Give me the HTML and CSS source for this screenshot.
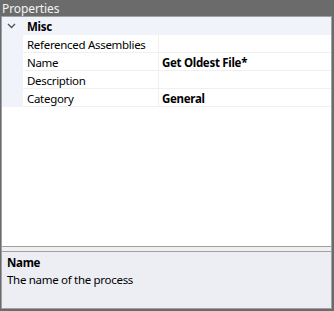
FILE: index.html
```html
<!DOCTYPE html>
<html>
<head>
<meta charset="utf-8">
<link rel="stylesheet" href="styles.css">
</head>
<body>
<div class="title">Properties</div>
<div class="panel">
  <div class="grid">
    <div class="cat">
      <div class="gut"><svg width="9" height="6" viewBox="0 0 9 6" class="chev"><path d="M1 1 L4.5 4.5 L8 1" fill="none" stroke="#555" stroke-width="1.4"/></svg></div>
      <div class="catname">Misc</div>
    </div>
    <div class="row"><div class="gut"></div><div class="name">Referenced Assemblies</div><div class="val"></div></div>
    <div class="row"><div class="gut"></div><div class="name">Name</div><div class="val bold">Get Oldest File*</div></div>
    <div class="row"><div class="gut"></div><div class="name">Description</div><div class="val"></div></div>
    <div class="row"><div class="gut"></div><div class="name">Category</div><div class="val bold">General</div></div>
  </div>
  <div class="splitter"></div>
  <div class="desc">
    <div class="dtitle">Name</div>
    <div class="dtext">The name of the process</div>
  </div>
</div>
</body>
</html>
```
FILE: styles.css
```css
html, body {
  margin: 0;
  padding: 0;
}
body {
  width: 334px;
  height: 311px;
  background: #6b6b6b;
  display: flex;
  flex-direction: column;
  font-family: "Noto Sans", "Open Sans", sans-serif;
  font-size: 11.5px;
  letter-spacing: -0.3px;
  color: #000;
  overflow: hidden;
}
.title {
  height: 16px;
  line-height: 18px;
  padding-left: 2px;
  color: #f4f4f4;
  flex: none;
  font-size: 12px;
  letter-spacing: -0.1px;
}
.panel {
  flex: 1;
  margin: 0 2px 2px 1px;
  border: 1px solid #a0a0a0;
  display: flex;
  flex-direction: column;
  background: #fff;
}
.grid {
  flex: 1;
  background: #fff;
}
.cat {
  height: 18px;
  display: flex;
  background: #f0f4fa;
}
.gut {
  width: 21px;
  flex: none;
  background: #f0f4fa;
  display: flex;
  align-items: center;
  justify-content: center;
}
.chev {
  margin-right: 2px;
}
.catname {
  padding-left: 4px;
  font-weight: bold;
  line-height: 19px;
}
.row {
  height: 18px;
  display: flex;
}
.name {
  width: 131px;
  padding-left: 4px;
  border-right: 1px solid #f0f0f0;
  border-bottom: 1px solid #f0f0f0;
  line-height: 19px;
  white-space: nowrap;
  flex: none;
  height: 17px;
}
.val {
  flex: 1;
  padding-left: 3px;
  border-bottom: 1px solid #f0f0f0;
  line-height: 19px;
  height: 17px;
  white-space: nowrap;
}
.bold {
  font-weight: bold;
}
.splitter {
  height: 4px;
  flex: none;
  background: #f0f0f0;
  border-top: 1px solid #a0a0a0;
  border-bottom: 1px solid #a0a0a0;
}
.desc {
  height: 56px;
  flex: none;
  background: #eceef3;
  padding-left: 5px;
  box-sizing: border-box;
  padding-top: 3px;
}
.dtitle {
  font-weight: bold;
  line-height: 16px;
}
.dtext {
  line-height: 18px;
}
```
